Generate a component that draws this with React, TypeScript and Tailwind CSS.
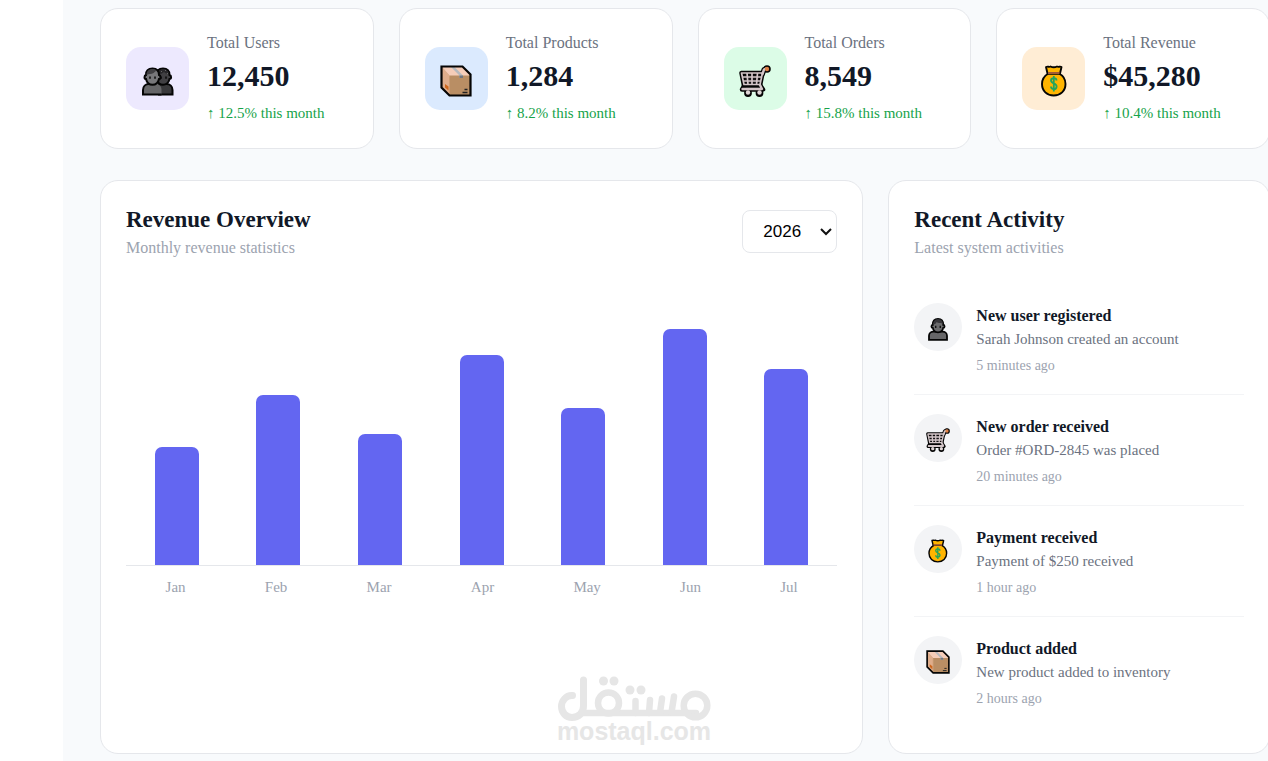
import type { ReactNode } from "react";

type IconProps = { className?: string };

function UserIcon({ className }: IconProps) {
  return (
    <svg viewBox="0 0 32 32" className={className} aria-hidden="true">
      <path d="M4 30.500V25c0-3.500 3-5.500 6-5.500h12c3 0 6 2 6 5.500v5.500z" fill="#666668" stroke="#050505" strokeWidth="2.400" />
      <path d="M9 10.500c0-5.500 3-8 7-8s7 2.500 7 8c2.300 0 2.300 4 0 4-.8 3.500-3.500 6-7 6s-6.200-2.500-7-6c-2.300 0-2.300-4 0-4z" fill="#6c6c6e" stroke="#050505" strokeWidth="2.400" />
      <path d="M9.500 10.500C9 5.500 12 3 16 3c4.500 0 7 2.500 6.500 7.500l-2-2.500c-2.500.5-5-.5-6.500-1.500 0 2-2.500 2.500-4.500 4z" fill="#37363a" />
      <path d="M13 11.500v3M19 11.500v3" stroke="#080808" strokeWidth="1.700" />
    </svg>
  );
}

function UsersIcon({ className }: IconProps) {
  return (
    <svg viewBox="0 0 34 32" className={className} aria-hidden="true">
      <path d="M18 29.500h13.500V25c0-3.500-2.500-6-6-6h-8z" fill="#39393b" stroke="#050505" strokeWidth="2" />
      <path d="M15.500 10c0-4.500 3-6.500 6.500-6.500s6.500 2 6.500 6.500c2.200.5 2 4 0 4-.7 3.500-3.500 5.800-6.500 5.800s-5.500-2-6.500-5.800z" fill="#414043" stroke="#050505" strokeWidth="2" />
      <path d="M17 8c2-5.500 9-5.500 11 0l-3 .5-2-1.500-3 2z" fill="#272629" />
      <path d="m20 6 1 1m3-2 1 1m1 2 1 1" stroke="#666" />
      <path d="M2 29.500V25c0-3.500 2.500-6 6-6h7c3.500 0 5.500 2.500 5.500 6v4.500z" fill="#666668" />
      <path d="M20.500 29.500H2V25c0-3.500 2.500-6 6-6h7" fill="none" stroke="#050505" strokeWidth="2" />
      <path d="M5 10c0-4.500 3-6.500 6.500-6.500S18 5.500 18 10c2 .5 2 4 0 4-.8 3.500-3.500 5.800-6.500 5.800S5.800 17.500 5 14c-2 0-2-3.500 0-4z" fill="#77777a" stroke="#050505" strokeWidth="2" />
      <path d="M5.500 10c0-4 2.500-6 6-6 2 0 3 .5 4 1.500l-3 2.500c-2 1.500-5 .5-7 2z" fill="#403f42" />
      <path d="M9 11.500v2.300m5-2.300v2.300m6-2.300v2.300m5-2.300v2.300" stroke="#070707" strokeWidth="1.500" />
    </svg>
  );
}

function BoxIcon({ className }: IconProps) {
  return (
    <svg viewBox="0 0 32 32" className={className} aria-hidden="true">
      <path d="M1.500 1.500h21l8 8v21h-21l-8-8z" fill="#b98e64" />
      <path d="m1.500 1.500 8 9v20l-8-8z" fill="#dfad8b" />
      <path d="M1.500 1.500h21l8 9h-21z" fill="#f5cdb9" />
      <path d="m11 2 8.500 8.500V13H23v-2.500L14.500 2z" fill="#b6b9bd" />
      <path d="M19.500 10.500H23V13h-3.500z" fill="#73777f" />
      <path d="M9.500 11.500v18" stroke="#cb9c73" />
      <path d="m5 19 3.500 2.500v4L5 22.500z" fill="#cd671d" />
      <path d="M24.500 24.500h3m-5 3h5" stroke="#222" strokeWidth="1.300" />
      <path d="M1.500 1.500h21l8 8v21h-21l-8-8z" fill="none" stroke="#050505" strokeWidth="2.200" />
    </svg>
  );
}

function CartIcon({ className }: IconProps) {
  return (
    <svg viewBox="0 0 32 32" className={className} aria-hidden="true" fill="none" strokeLinecap="round" strokeLinejoin="round">
      <path d="M2.500 8h21L21 20.500H5z" fill="#161416" stroke="#050505" strokeWidth="4.500" />
      <path d="M23.500 9 25 4.500l3-1" stroke="#050505" strokeWidth="5" />
      <circle cx="28" cy="4" r="3.800" fill="#050505" />
      <path d="m21 20 3 4.500H3L5 21" stroke="#050505" strokeWidth="4.500" />
      <circle cx="9" cy="28" r="3.900" fill="#050505" />
      <circle cx="20.500" cy="28" r="3.900" fill="#050505" />
      <path d="M2.500 8h21L21 19.500H5zM4 12h18M4.500 16h17M8 8l1 11.500M13 8v11.500M18.500 8l-1 11.500" stroke="#d3c5c8" strokeWidth="1.700" />
      <path d="M23.500 9 25 4.500l2-1M21 20l2 4H3.500" stroke="#d3c5c8" strokeWidth="2.400" />
      <circle cx="28" cy="4" r="2.200" fill="#dc7f45" />
      <circle cx="9" cy="27.500" r="2.200" fill="#e0d6d7" />
      <circle cx="20.500" cy="27.500" r="2.200" fill="#e0d6d7" />
    </svg>
  );
}

function MoneyIcon({ className }: IconProps) {
  return (
    <svg viewBox="0 0 32 32" className={className} aria-hidden="true">
      <path d="M10.500 8.500C6 11 4 15 4 19c0 7 5 11.500 11.700 11.500S27.500 26 27.500 19c0-4-1.500-8-6.500-10.500z" fill="#ffb400" stroke="#050505" strokeWidth="1.900" />
      <path d="M9.500 8.500 8 2c2-1 3 .5 4.500-.5 2 1 4.500 1 6.500 0 1.500 1 3-.5 4.500.5L22 8.500z" fill="#ffb400" stroke="#050505" strokeWidth="1.900" strokeLinejoin="round" />
      <path d="M10 8h11.500" stroke="#a25a35" strokeWidth="2" />
      <path d="M18.500 15.500c0-1.700-1.100-2.300-2.700-2.300s-2.800.8-2.800 2.400c0 3.500 5.600 2.200 5.600 5.800 0 1.700-1.200 2.700-2.800 2.700S13 23.300 13 21.600M15.800 11v15.500" fill="none" stroke="#23a45c" strokeWidth="1.800" />
    </svg>
  );
}

function MostaqlLogo({ className }: IconProps) {
  return (
    <svg viewBox="0 0 156 72" className={className} role="img" aria-label="mostaql.com">
      <g fill="none" stroke="#e6e6e6" strokeLinecap="round" strokeLinejoin="round">
        <path d="M16.500 19.500C10 19 5.500 25 5.500 30.500c0 6 4.500 11 10.500 11 6.500 0 11.500-4.500 11.500-11.500V4" strokeWidth="7" />
        <path d="M26 37h114" strokeWidth="6.500" />
        <circle cx="52.500" cy="27" r="10.500" strokeWidth="6.500" />
        <circle cx="139.500" cy="29.500" r="11.800" strokeWidth="6.500" />
        <path d="M79.500 25v12M94 24l-1 13M106 22.500l-2 14M118 20.500l-2.500 16" strokeWidth="6.500" />
      </g>
      <g fill="#e6e6e6">
        <circle cx="47.500" cy="5" r="4.500" />
        <circle cx="58" cy="5" r="4.500" />
        <circle cx="74" cy="14" r="4.500" />
        <circle cx="85" cy="14" r="4.500" />
      </g>
      <text x="78" y="64" textAnchor="middle" fill="#e6e6e6" className="font-['Liberation_Sans'] text-[25px] font-bold">
        mostaql.com
      </text>
    </svg>
  );
}

const stats = [
  { label: "Total Users", value: "12,450", change: "12.5%", tint: "bg-[#ede9fe]", icon: <UsersIcon className="h-8 w-[34px]" /> },
  { label: "Total Products", value: "1,284", change: "8.2%", tint: "bg-[#dbeafe]", icon: <BoxIcon className="size-8" /> },
  { label: "Total Orders", value: "8,549", change: "15.8%", tint: "bg-[#dcfce7]", icon: <CartIcon className="size-8" /> },
  { label: "Total Revenue", value: "$45,280", change: "10.4%", tint: "bg-[#ffedd5]", icon: <MoneyIcon className="size-8" /> },
];

const revenue = [
  { month: "Jan", percent: 45 },
  { month: "Feb", percent: 65 },
  { month: "Mar", percent: 50 },
  { month: "Apr", percent: 80 },
  { month: "May", percent: 60 },
  { month: "Jun", percent: 90 },
  { month: "Jul", percent: 75 },
];

const activities = [
  { title: "New user registered", detail: "Sarah Johnson created an account", time: "5 minutes ago", icon: <UserIcon className="size-6" /> },
  { title: "New order received", detail: "Order #ORD-2845 was placed", time: "20 minutes ago", icon: <CartIcon className="size-6" /> },
  { title: "Payment received", detail: "Payment of $250 received", time: "1 hour ago", icon: <MoneyIcon className="size-6" /> },
  { title: "Product added", detail: "New product added to inventory", time: "2 hours ago", icon: <BoxIcon className="size-6" /> },
];

function PanelHeading({ title, subtitle }: { title: string; subtitle: string }) {
  return (
    <div>
      <h2 className="text-[23px] leading-7 font-bold text-[#111827]">{title}</h2>
      <p className="mt-0.5 text-base leading-6 text-[#9ca3af]">{subtitle}</p>
    </div>
  );
}

function Card({ className, children }: { className: string; children: ReactNode }) {
  return <section className={`rounded-[18px] border border-[#e5e7eb] bg-white ${className}`}>{children}</section>;
}

export default function App() {
  return (
    <div className="flex min-h-screen overflow-hidden bg-white pl-[63px] font-['Liberation_Serif',serif]">
      <main className="min-w-0 flex-1 bg-[#f8fafc] pt-2 pb-[7px] pl-[37px]">
        <div className="-mr-[2px]">
          <div className="grid grid-cols-4 gap-[25px]">
            {stats.map((stat) => (
              <Card key={stat.label} className="flex h-[141px] items-center gap-[18px] px-[25px]">
                <div className={`flex size-[63px] shrink-0 items-center justify-center rounded-[15px] pt-1 ${stat.tint}`}>{stat.icon}</div>
                <div className="pb-1">
                  <p className="text-base leading-6 text-[#6b7280]">{stat.label}</p>
                  <p className="mt-[3px] text-[30px] leading-9 font-bold text-[#111827]">{stat.value}</p>
                  <p className="mt-[9px] text-[15px] leading-5 text-[#16a34a]">↑ {stat.change} this month</p>
                </div>
              </Card>
            ))}
          </div>

          <div className="mt-[31px] grid grid-cols-[2fr_1fr] gap-[25px]">
            <Card className="flex flex-col px-[25px] pt-[25px] pb-[5px]">
              <header className="flex items-start justify-between">
                <PanelHeading title="Revenue Overview" subtitle="Monthly revenue statistics" />
                <div className="grid items-center pt-1">
                  <select
                    aria-label="Year"
                    defaultValue="2026"
                    className="col-start-1 row-start-1 h-[43px] w-[95px] appearance-none rounded-lg border border-[#e5e7eb] bg-white pl-5 font-['Liberation_Sans',sans-serif] text-[17px] text-black"
                  >
                    <option>2026</option>
                    <option>2025</option>
                  </select>
                  <svg viewBox="0 0 12 8" className="pointer-events-none col-start-1 row-start-1 mr-[5px] h-2 w-3 justify-self-end" aria-hidden="true">
                    <path d="m1 1 5 5 5-5" fill="none" stroke="#111" strokeWidth="2" />
                  </svg>
                </div>
              </header>
              <div className="mt-[43px] flex h-[263px] items-end justify-around border-b border-[#e5e7eb]">
                {revenue.map((bar) => (
                  <div key={bar.month} className="w-11 rounded-t-[7px] bg-[#6366f1]" style={{ height: `${bar.percent}%` }} />
                ))}
              </div>
              <div className="mt-[9px] flex justify-around text-[15px] leading-6 text-[#9ca3af]">
                {revenue.map((bar) => (
                  <span key={bar.month}>{bar.month}</span>
                ))}
              </div>
              <MostaqlLogo className="mt-auto ml-[430px] h-[72px] w-[156px]" />
            </Card>

            <Card className="px-[25px] pt-[25px] pb-[26px]">
              <PanelHeading title="Recent Activity" subtitle="Latest system activities" />
              <ul className="mt-6">
                {activities.map((item) => (
                  <li key={item.title} className="flex gap-[14px] border-b border-[#f3f4f6] pt-[19px] pb-[18px] last:border-b-0">
                    <div className="flex size-12 shrink-0 items-center justify-center rounded-full bg-[#f3f4f6] pt-[3px]">{item.icon}</div>
                    <div className="pt-[2px]">
                      <h3 className="text-base leading-[22px] font-bold text-[#111827]">{item.title}</h3>
                      <p className="text-[15px] leading-6 text-[#6b7280]">{item.detail}</p>
                      <p className="mt-1 text-sm leading-[21px] text-[#9ca3af]">{item.time}</p>
                    </div>
                  </li>
                ))}
              </ul>
            </Card>
          </div>
        </div>
      </main>
    </div>
  );
}
